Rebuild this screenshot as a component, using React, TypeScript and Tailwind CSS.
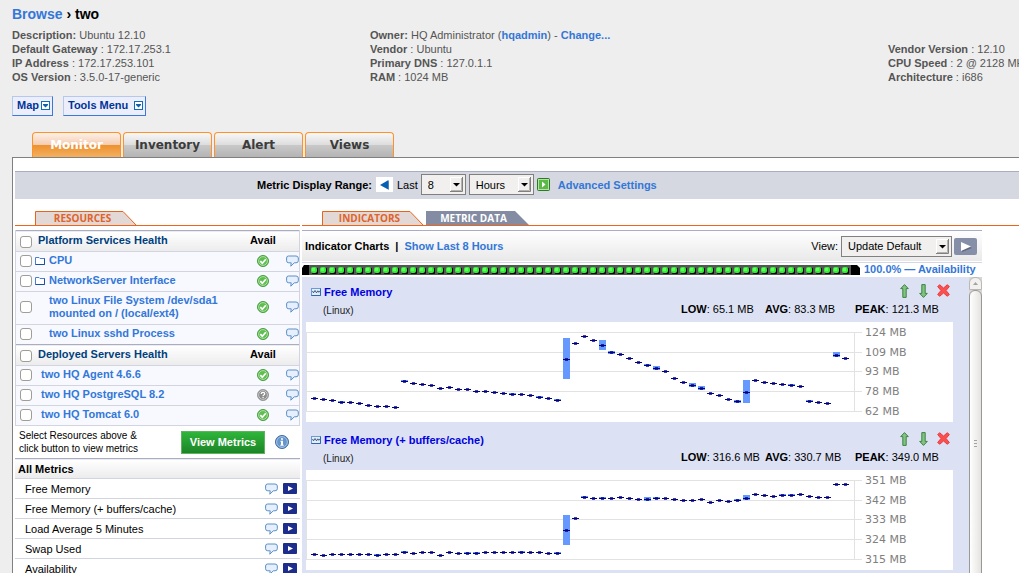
import React, { useState } from 'react';

const linkClass = 'font-bold text-[#3377d8] hover:underline';

interface Resource {
  name: string;
  status: 'up' | 'unknown';
  folder?: boolean;
}

interface Chart {
  title: string;
  low: string;
  avg: string;
  peak: string;
  labels: string[];
  points: number[];
  // [index, top, height] of the min/max range behind a point
  ranges: number[][];
}

const platformServices: Resource[] = [
  { name: 'CPU', status: 'up', folder: true },
  { name: 'NetworkServer Interface', status: 'up', folder: true },
  { name: 'two Linux File System /dev/sda1 mounted on / (local/ext4)', status: 'up' },
  { name: 'two Linux sshd Process', status: 'up' }
];

const deployedServers: Resource[] = [
  { name: 'two HQ Agent 4.6.6', status: 'up' },
  { name: 'two HQ PostgreSQL 8.2', status: 'unknown' },
  { name: 'two HQ Tomcat 6.0', status: 'up' }
];

const metrics = ['Free Memory', 'Free Memory (+ buffers/cache)', 'Load Average 5 Minutes', 'Swap Used', 'Availability'];

const charts: Chart[] = [
  {
    title: 'Free Memory',
    low: '65.1 MB',
    avg: '83.3 MB',
    peak: '121.3 MB',
    labels: ['124 MB', '109 MB', '93 MB', '78 MB', '62 MB'],
    points: [
      76, 77, 78, 80, 80, 81, 83, 84, 84, 85, 59, 61, 62, 63, 66, 65, 67, 67, 69, 69,
      70, 71, 72, 72, 73, 75, 76, 78, 37, 21, 14, 18, 23, 30, 32, 36, 40, 43, 46, 49,
      56, 60, 63, 66, 71, 73, 77, 79, 70, 58, 60, 61, 62, 63, 64, 79, 80, 81, 33, 36
    ],
    ranges: [
      [3, 79, 2], [10, 58, 2], [22, 71, 2], [25, 74, 2], [27, 77, 2], [28, 16, 41], [32, 18, 10],
      [33, 29, 3], [37, 42, 2], [38, 44, 4], [42, 61, 4], [43, 64, 4], [47, 78, 3], [48, 58, 23],
      [53, 62, 2], [55, 78, 2], [58, 30, 5]
    ]
  },
  {
    title: 'Free Memory (+ buffers/cache)',
    low: '316.6 MB',
    avg: '330.7 MB',
    peak: '349.0 MB',
    labels: ['351 MB', '342 MB', '333 MB', '324 MB', '315 MB'],
    points: [
      84, 85, 84, 84, 84, 84, 84, 85, 84, 84, 82, 83, 82, 82, 85, 82, 83, 83, 83, 82,
      82, 82, 82, 82, 82, 82, 83, 83, 60, 48, 27, 28, 28, 28, 27, 28, 29, 29, 28, 28,
      29, 30, 30, 29, 32, 30, 31, 30, 28, 24, 25, 26, 25, 25, 24, 26, 27, 27, 14, 14
    ],
    ranges: [
      [7, 84, 2], [10, 81, 2], [17, 82, 2], [18, 82, 2], [23, 81, 2], [27, 82, 2], [28, 45, 30],
      [30, 26, 2], [32, 27, 2], [37, 27, 4], [38, 27, 2], [47, 29, 2], [48, 25, 5], [52, 24, 2], [53, 24, 2]
    ]
  }
];

const gridLines = [10, 30, 49, 69, 89];

function BubbleIcon() {
  return (
    <svg width="13" height="12" viewBox="0 0 13 12" className="shrink-0">
      <path
        d="M2.500 1h7.500q2.300 0 2.300 2v2.800q0 2-2.300 2H8.300L4.800 11.200l.4-3.400H2.800Q.6 7.800.6 5.800V3q0-2 1.900-2z"
        fill="#e6effd"
        stroke="#5c8fc4"
      />
    </svg>
  );
}

function StatusIcon({ status }: { status: Resource['status'] }) {
  if (status === 'unknown') {
    return (
      <svg width="12" height="12" viewBox="0 0 12 12">
        <circle cx="6" cy="6" r="5.500" fill="#808080" stroke="#9a9a9a" />
        <circle cx="6" cy="6" r="4.400" fill="#8d8d8d" stroke="#d8d8d8" strokeWidth="0.800" />
        <path d="M4.300 4.900q0-1.600 1.700-1.600t1.700 1.400q0 .8-.9 1.300-.7.4-.7 1" fill="none" stroke="#fff" strokeWidth="1.300" />
        <rect x="5.400" y="7.800" width="1.300" height="1.300" fill="#fff" />
      </svg>
    );
  }
  return (
    <svg width="12" height="12" viewBox="0 0 12 12">
      <circle cx="6" cy="6" r="5.500" fill="#55b848" stroke="#4a9f42" />
      <circle cx="6" cy="6" r="4.400" fill="#5fbe50" stroke="#b4e2aa" strokeWidth="0.900" />
      <path d="M3.300 6.200l2 2 3.500-4" fill="none" stroke="#fff" strokeWidth="1.700" />
    </svg>
  );
}

function FolderIcon() {
  return (
    <svg width="10" height="9" viewBox="0 0 10 9">
      <path d="M.5 8.500V1.500h3.500l1 1h4.500v6z" fill="#fff" stroke="#4b7fd6" />
      <path d="M.5 8.500h9v-6" fill="none" stroke="#1b4fa8" />
    </svg>
  );
}

function MenuArrowIcon() {
  return (
    <svg width="9" height="9" viewBox="0 0 9 9">
      <rect x="0.500" y="0.500" width="8" height="8" fill="#fff" stroke="#0f6cb8" />
      <path d="M2 3h5v1L4.500 6.500 2 4z" fill="#0f5fae" />
    </svg>
  );
}

function ChartIcon() {
  return (
    <svg width="10" height="8" viewBox="0 0 10 8">
      <rect x="0.500" y="0.500" width="9" height="7" fill="#e3eefb" stroke="#6a9bd8" />
      <path d="M.5 7.500h9v-7" fill="none" stroke="#2f66b8" />
      <path d="M1.500 3l1 1.800L4 2.500l1.500 2.300 1.300-2 1 1.500 1-1.500" fill="none" stroke="#2f4a6c" strokeWidth="0.900" />
    </svg>
  );
}

function ArrowIcon({ down }: { down?: boolean }) {
  return (
    <svg width="11" height="14" viewBox="-1 0 11 14" className={down ? 'rotate-180' : ''}>
      <path d="M4.500.6L8.300 4.600H6.200V13.400H2.800V4.600H.7z" fill="#84c283" stroke="#2f7d32" strokeWidth="0.900" />
    </svg>
  );
}

function DeleteIcon() {
  return (
    <svg width="13" height="13" viewBox="0 0 13 13">
      <path
        d="M2.600.7l3.900 3.300L10.400.7l1.900 1.900L9 6.500l3.300 3.900-1.900 1.900L6.500 9l-3.900 3.300-1.900-1.900L4 6.500.7 2.600z"
        fill="#fb5050"
        stroke="#e8393c"
      />
    </svg>
  );
}

function Select({ label, options, className }: { label: string; options: string[]; className: string }) {
  return (
    <div className={`relative h-[21px] ${className}`}>
      <select
        aria-label={label}
        className="w-full h-full appearance-none border border-[#808080] bg-[#f1f0ee] pl-1.5 text-[11px] text-black"
      >
        {options.map((o) => (
          <option key={o}>{o}</option>
        ))}
      </select>
      <svg width="13" height="15" viewBox="0 0 13 15" className="absolute right-[3px] top-[3px] pointer-events-none">
        <rect width="13" height="15" fill="#f1f0ee" />
        <path d="M.5 14.500V.5h12" fill="none" stroke="#fff" />
        <path d="M0 14.500h12.500V0" fill="none" stroke="#808080" />
        <path d="M1 13.500h10.500V1" fill="none" stroke="#b4b2ae" />
        <path d="M3 6h7L6.500 9.500z" fill="#000" />
      </svg>
    </div>
  );
}

function Checkbox({ label }: { label: string }) {
  return (
    <input
      type="checkbox"
      aria-label={label}
      className="block size-3 appearance-none rounded-[3px] border border-[#a09c96] bg-white checked:bg-[#3377d8]"
    />
  );
}

function ResourceTable({ title, items, indent }: { title: string; items: Resource[]; indent: string }) {
  return (
    <table className="w-full table-fixed border-collapse text-left">
      <colgroup>
        <col className="w-[17px]" />
        <col />
        <col className="w-[46px]" />
        <col className="w-[13px]" />
      </colgroup>
      <thead>
        <tr className="h-[21px] border-y border-t-[#a9adc4] border-b-[#d2d5df] bg-linear-to-b from-white to-[#ececec]">
          <th className="pl-1 pt-0.5"><Checkbox label={`Select all of ${title}`} /></th>
          <th className="pb-0.5 pl-[5px] text-[#003f7d]">{title}</th>
          <th className="pb-0.5 text-center">Avail</th>
          <th />
        </tr>
      </thead>
      <tbody>
        {items.map((item) => (
          <tr key={item.name} className="h-5 border-b border-b-[#d2d5df] bg-[#f7f9ff]">
            <td className="pb-0.5 pl-1"><Checkbox label={item.name} /></td>
            <td>
              <div className="flex items-center gap-1 pb-1 pt-0.5">
                {item.folder && <span className="pl-0.5"><FolderIcon /></span>}
                <a href="#" className={`${linkClass} leading-[13px] ${item.folder ? '' : indent}`}>{item.name}</a>
              </div>
            </td>
            <td><div className="flex justify-center pb-0.5"><StatusIcon status={item.status} /></div></td>
            <td><a href="#" aria-label="Comment" className="block pb-0.5"><BubbleIcon /></a></td>
          </tr>
        ))}
      </tbody>
    </table>
  );
}

function IndicatorChart({ chart }: { chart: Chart }) {
  return (
    <section className="h-[148px] pl-1 pr-4 pt-1.5">
      <div className="flex h-[17px] items-center pl-[5px] pr-[3px]">
        <ChartIcon />
        <a href="#" className="ml-[3px] flex-1 font-bold text-[#0000e0]">{chart.title}</a>
        <div className="flex items-center gap-2 pb-0.5">
          <button aria-label="Move up"><ArrowIcon /></button>
          <button aria-label="Move down"><ArrowIcon down /></button>
          <button aria-label="Remove"><DeleteIcon /></button>
        </div>
      </div>
      <div className="flex h-[22px] items-center pb-1 pl-[17px] pr-2">
        <span className="flex-1 pt-1 text-[10px] text-[#222]">(Linux)</span>
        <span className="w-[84px] whitespace-nowrap"><b>LOW</b>: {chart.low}</span>
        <span className="w-[90px] whitespace-nowrap"><b>AVG</b>: {chart.avg}</span>
        <span className="w-[90px] whitespace-nowrap"><b>PEAK</b>: {chart.peak}</span>
      </div>
      <svg width="647" height="100" viewBox="0 0 647 100" shapeRendering="crispEdges" className="block bg-white">
        {gridLines.map((y, i) => (
          <g key={y}>
            <rect x="0" y={y} width="556" height="1" fill="#e2e2e2" />
            <text x="559" y={y + 4} fontSize="11" fill="#808080" fontFamily='"DejaVu Sans", sans-serif'>{chart.labels[i]}</text>
          </g>
        ))}
        <rect x="0" y="10" width="1" height="80" fill="#e2e2e2" />
        <rect x="548" y="10" width="1" height="80" fill="#e2e2e2" />
        {chart.ranges.map(([i, top, height]) => (
          <rect key={i} x={5 + i * 9} y={top} width="7" height={height} fill="#6699ff" />
        ))}
        {chart.points.map((y, i) => (
          <g key={i} fill="#000080">
            <rect x={5 + i * 9} y={y} width="7" height="1" />
            <rect x={7 + i * 9} y={y - 1} width="3" height="3" fillOpacity="0.750" />
          </g>
        ))}
      </svg>
    </section>
  );
}

function AvailabilityBar() {
  return (
    <svg width="558" height="10" viewBox="0 0 558 10">
      <path d="M2 0h553l3 3v7H0V3z" fill="#000" />
      <rect x="7" width="542" height="10" fill="#555" />
      {Array.from({ length: 60 }, (_, i) => (
        <g key={i}>
          <rect x={10 + i * 9} y="3" width="6" height="6" rx="1" fill="#000" />
          <rect x={9 + i * 9} y="2" width="6" height="6" rx="2" fill="#33ee33" />
          <rect x={10 + i * 9} y="3" width="3" height="3" fill="#60ff60" />
        </g>
      ))}
    </svg>
  );
}

function SubTab({ label, active, width }: { label: string; active?: boolean; width: number }) {
  return (
    <button className="relative h-3.5 text-[10px] font-bold" style={{ width }}>
      <svg width={width} height="14" className="absolute inset-0">
        {active ? (
          <path d={`M.5 15V.5H${width - 15}L${width - 1} 15`} fill="#e2d8d6" stroke="#e8641b" />
        ) : (
          <path d={`M0 14V0H${width - 14}L${width} 14z`} fill="#838ca3" />
        )}
      </svg>
      <span
        className={`relative block pr-2 leading-[15px] font-["Open_Sans",sans-serif] ${active ? 'text-[#e0632a]' : 'text-white'}`}
      >
        {label}
      </span>
    </button>
  );
}

export default function App() {
  const [activeTab, setActiveTab] = useState('Monitor');

  const tabClass = (tab: string) => {
    const base = 'w-[89px] h-[25px] rounded-t-[4px] border border-b-0 border-[#ff9127] font-["DejaVu_Sans",sans-serif] text-[12px] font-bold ';
    const active = 'text-white bg-[linear-gradient(#fdf0e8,#f5cdb2_48%,#ee922e_52%,#f2b062)]';
    const inactive = 'text-[#3c3c3c] bg-[linear-gradient(#f8f8f8,#dedede_48%,#c8c8c8_52%,#b4b4b4)]';
    return base + (activeTab === tab ? active : inactive);
  };

  const menuButtonClass =
    'flex h-5 items-center border border-[#b5c8ee] border-r-[#3b78d8] border-b-[#3b78d8] bg-[#eceffb] pb-0.5 font-bold text-[#003399]';

  return (
    <div className='h-screen overflow-hidden bg-[#eeeeee] font-["Liberation_Sans",Arial,sans-serif] text-[11px] leading-[14px] text-black flex flex-col'>
      <header className="shrink-0 pl-3">
        <h1 className="pt-1.5 text-[14px] leading-4 font-bold">
          <a href="#" className="text-[#3377d8]">Browse</a> › two
        </h1>

        {/* Platform details */}
        <div className="mt-1.5 grid grid-cols-[358px_518px_1fr] whitespace-nowrap text-[#555]">
          <div>
            <p><b>Description:</b> Ubuntu 12.10</p>
            <p><b>Default Gateway</b> : 172.17.253.1</p>
            <p><b>IP Address</b> : 172.17.253.101</p>
            <p><b>OS Version</b> : 3.5.0-17-generic</p>
          </div>
          <div>
            <p>
              <b>Owner:</b> HQ Administrator (<a href="#" className={linkClass}>hqadmin</a>) - <a href="#" className={linkClass}>Change...</a>
            </p>
            <p><b>Vendor</b> : Ubuntu</p>
            <p><b>Primary DNS</b> : 127.0.1.1</p>
            <p><b>RAM</b> : 1024 MB</p>
          </div>
          <div className="min-w-0 pt-3.5">
            <p><b>Vendor Version</b> : 12.10</p>
            <p><b>CPU Speed</b> : 2 @ 2128 MHz</p>
            <p><b>Architecture</b> : i686</p>
          </div>
        </div>

        <div className="mt-3 flex gap-2.5">
          <button className={`${menuButtonClass} gap-0.5 pl-1 pr-0.5`}>Map <MenuArrowIcon /></button>
          <button className={`${menuButtonClass} gap-1.5 pl-1 pr-0.5`}>Tools Menu <MenuArrowIcon /></button>
        </div>

        <nav className="mt-4 flex gap-0.5 pl-5">
          {['Monitor', 'Inventory', 'Alert', 'Views'].map((tab) => (
            <button key={tab} onClick={() => setActiveTab(tab)} className={tabClass(tab)}>{tab}</button>
          ))}
        </nav>
      </header>

      <main className="ml-3 min-h-0 flex-1 border-l border-t border-[#808080] bg-white pl-0.5 pt-[13px]">
        {/* Display range */}
        <div className="flex h-7 items-center border-t border-t-[#a9adc0] bg-[#d5d8e0] pb-0.5 pl-[242px]">
          <b>Metric Display Range:</b>
          <button aria-label="Previous range" className="ml-1 flex h-[15px] w-[17px] items-center justify-center bg-white">
            <svg width="9" height="10" viewBox="0 0 9 10">
              <path d="M9 1v9L2 6z" fill="#9ab" />
              <path d="M8.500 0v9.500L0 5z" fill="#0560b4" />
            </svg>
          </button>
          <span className="ml-1 mr-[3px]">Last</span>
          <Select label="Range amount" options={['8', '4', '12']} className="w-[45px]" />
          <Select label="Range unit" options={['Hours', 'Days', 'Minutes']} className="ml-[3px] w-[65px]" />
          <button aria-label="Apply range" className="ml-[3px]">
            <svg width="13" height="13" viewBox="0 0 13 13">
              <rect x="0.500" y="0.500" width="12" height="12" rx="1" fill="#5bb947" stroke="#2c7a25" />
              <rect x="1.500" y="1.500" width="10" height="10" fill="none" stroke="#b4e2a8" />
              <path d="M5 3.500v6l3.500-3z" fill="#fff" />
            </svg>
          </button>
          <a href="#" className={`ml-2 ${linkClass}`}>Advanced Settings</a>
        </div>

        <div className="mt-3 flex gap-0.5">
          {/* Resources */}
          <aside className="w-[285px] shrink-0">
            <div className="flex pl-5">
              <SubTab label="RESOURCES" active width={103} />
            </div>
            <div className="mb-1 h-px bg-[#f0641a]" />
            <div className="border-x border-x-[#d2d5df]">
              <ResourceTable title="Platform Services Health" items={platformServices} indent="pl-4" />
              <div className="-mt-px">
                <ResourceTable title="Deployed Servers Health" items={deployedServers} indent="pl-2" />
              </div>
            </div>

            <div className="flex h-8 items-center pl-1">
              <p className="w-[162px] text-[10px] leading-[13px]">
                Select Resources above &amp;<br />click button to view metrics
              </p>
              <button className="h-[23px] w-[84px] border border-[#5fb25f] bg-linear-to-b from-[#2fb53a] to-[#1c8526] font-bold text-white">
                View Metrics
              </button>
              <button aria-label="Help" className="ml-2.5">
                <svg width="14" height="14" viewBox="0 0 14 14">
                  <circle cx="7" cy="7" r="6.500" fill="#4c7fb8" stroke="#3f6ca3" />
                  <circle cx="7" cy="7" r="5.400" fill="#6496cd" stroke="#b5cfea" strokeWidth="0.900" />
                  <path d="M6 3.200h2v1.500H6zM5.400 5.700H8v4h.7v1H5.300v-1H6v-3h-.6z" fill="#fff" />
                </svg>
              </button>
            </div>

            <table className="w-full border-collapse text-left">
              <thead>
                <tr className="h-5 border-y border-t-[#a9adc4] border-b-[#d2d5df] bg-linear-to-b from-white to-[#ececec]">
                  <th colSpan={3} className="pl-[3px]">All Metrics</th>
                </tr>
              </thead>
              <tbody>
                {metrics.map((metric) => (
                  <tr key={metric} className="h-5 border-b border-b-[#d2d5df]">
                    <td className="pl-2.5">{metric}</td>
                    <td className="w-[18px]"><a href="#" aria-label="Comment"><BubbleIcon /></a></td>
                    <td className="w-[17px]">
                      <button aria-label={`Show ${metric}`} className="block">
                        <svg width="14" height="11" viewBox="0 0 14 11">
                          <rect width="14" height="11" rx="1" fill="#1c2d8c" />
                          <path d="M5 3v5l5-2.500z" fill="#fff" />
                        </svg>
                      </button>
                    </td>
                  </tr>
                ))}
              </tbody>
            </table>
          </aside>

          {/* Indicators */}
          <section className="min-w-0 flex-1">
            <div className="flex gap-px pl-5">
              <SubTab label="INDICATORS" active width={103} />
              <SubTab label="METRIC DATA" width={103} />
            </div>
            <div className="mb-1 h-px bg-[#f0641a]" />
            <div className="w-[680px]">
              <div className="flex h-[31px] items-center border-t border-t-[#a9adc4] bg-linear-to-b from-white to-[#e9e9e9] pl-[3px] pr-[5px]">
                <b>Indicator Charts</b>
                <b className="mx-1.5">|</b>
                <a href="#" className={`flex-1 ${linkClass}`}>Show Last 8 Hours</a>
                <span className="mr-[3px]">View:</span>
                <Select label="View" options={['Update Default', 'Create New']} className="mr-0.5 w-[111px]" />
                <button aria-label="Apply view">
                  <svg width="23" height="17" viewBox="0 0 23 17" className="block">
                    <rect width="23" height="17" rx="2" fill="#8590a8" />
                    <path d="M8 5v9l10-4z" fill="#5f6880" />
                    <path d="M7 4v9l10-4.500z" fill="#fff" />
                  </svg>
                </button>
              </div>
              <div className="mt-px flex h-[15px] items-center gap-1 border-t border-t-[#d5d8e4]">
                <AvailabilityBar />
                <a href="#" className={`whitespace-nowrap pb-0.5 ${linkClass}`}>100.0% — Availability</a>
              </div>

              <div className="flex">
                <div className="flex-1 bg-[#dce2f4] pb-6">
                  {charts.map((chart) => (
                    <IndicatorChart key={chart.title} chart={chart} />
                  ))}
                </div>
                {/* Scroll track */}
                <div className="flex w-[13px] shrink-0 flex-col bg-[#d8d6d2]">
                  <div className="flex h-[13px] items-center justify-center rounded-t-[6px] border border-[#bab8b4] bg-[#f2f1f0]">
                    <svg width="5" height="3" viewBox="0 0 5 3"><path d="M0 3h5L2.500 0z" fill="#a5a3a0" /></svg>
                  </div>
                  <div className="flex flex-1 items-center justify-center rounded-t-[6px] border border-[#9b9995] bg-linear-to-r from-white to-[#e4e3e1]">
                    <svg width="3" height="7" viewBox="0 0 3 7"><path d="M0 .5h3M0 3.500h3M0 6.500h3" stroke="#a5a3a0" /></svg>
                  </div>
                </div>
              </div>
            </div>
          </section>
        </div>
      </main>
    </div>
  );
}
